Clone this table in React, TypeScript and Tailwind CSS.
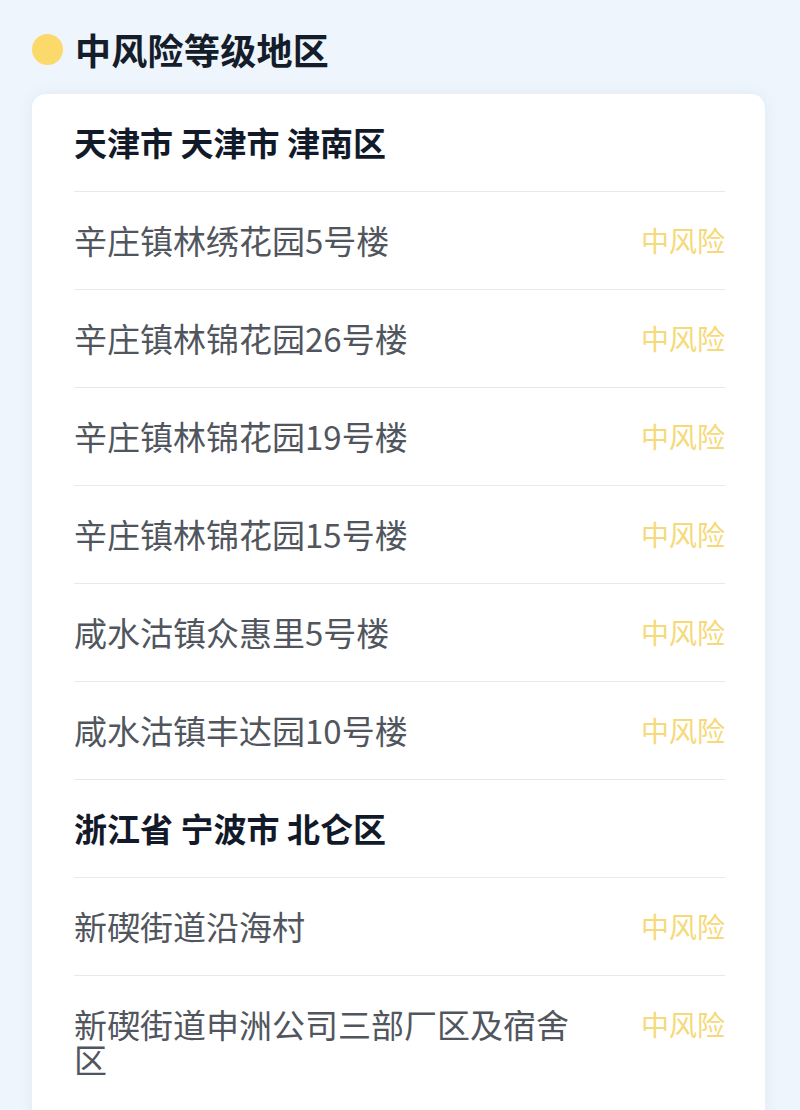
const groups = [
  {
    title: '天津市 天津市 津南区',
    items: [
      '辛庄镇林绣花园5号楼',
      '辛庄镇林锦花园26号楼',
      '辛庄镇林锦花园19号楼',
      '辛庄镇林锦花园15号楼',
      '咸水沽镇众惠里5号楼',
      '咸水沽镇丰达园10号楼',
    ],
  },
  {
    title: '浙江省 宁波市 北仑区',
    items: ['新碶街道沿海村', '新碶街道申洲公司三部厂区及宿舍区'],
  },
];

export default function App() {
  return (
    <div
      className="min-h-screen bg-[#eef5fc] px-8 pt-[29px]"
      style={{ fontFamily: '"Noto Sans CJK SC", "Noto Sans", sans-serif' }}
    >
      <div className="flex items-center gap-3 h-[40px]">
        <span className="w-[31px] h-[31px] rounded-full bg-[#fcd96b]" />
        <h2 className="text-[36px] leading-[40px] font-bold text-[#151d2b] tracking-[0.3px]">中风险等级地区</h2>
      </div>

      <div className="mt-[25px] w-[733px] bg-white rounded-[14px] shadow-[0_0_12px_rgba(180,200,225,0.25)] pl-[42px] pr-[40px] pb-[60px]">
        {groups.map((group) => (
          <div key={group.title}>
            <div className="py-[31px] leading-[35px] text-[33px] font-bold text-[#121a2a] border-b border-[#e9e9ec]">
              {group.title}
            </div>
            {group.items.map((item, i) => (
              <div
                key={item}
                className={`flex items-start justify-between gap-[70px] py-[31px] ${
                  i < group.items.length - 1 || group.title.startsWith('天津') ? 'border-b border-[#e9e9ec]' : ''
                }`}
              >
                <span className="flex-1 text-[33px] leading-[35px] text-[#51565e]">{item}</span>
                <span className="shrink-0 text-[28px] leading-[35px] text-[#f6d978]">中风险</span>
              </div>
            ))}
          </div>
        ))}
      </div>
    </div>
  );
}
